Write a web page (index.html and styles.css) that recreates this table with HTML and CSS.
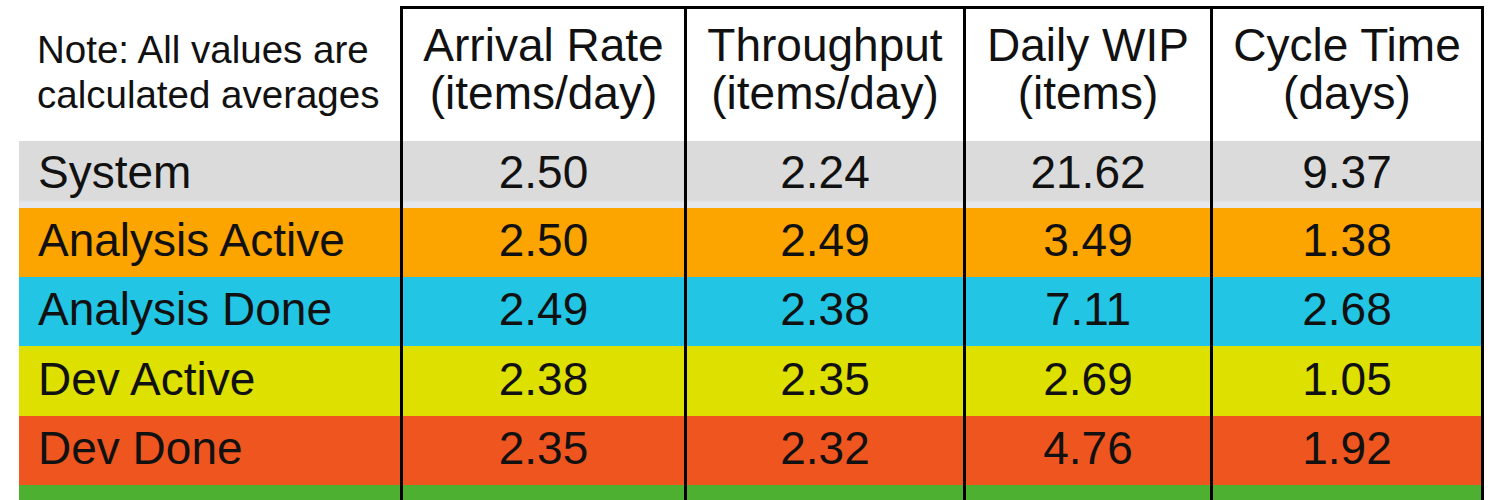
FILE: index.html
```html
<!DOCTYPE html>
<html lang="en">
<head>
<meta charset="utf-8">
<title>Flow metrics</title>
<link rel="stylesheet" href="styles.css">
</head>
<body>
<div class="metrics">
  <div class="cell note">Note: All values are<br>calculated averages</div>
  <div class="cell head">Arrival Rate<br>(items/day)</div>
  <div class="cell head">Throughput<br>(items/day)</div>
  <div class="cell head">Daily WIP<br>(items)</div>
  <div class="cell head last">Cycle Time<br>(days)</div>

  <div class="cell label system">System</div>
  <div class="cell val system">2.50</div>
  <div class="cell val system">2.24</div>
  <div class="cell val system">21.62</div>
  <div class="cell val last system">9.37</div>

  <div class="cell label aa">Analysis Active</div>
  <div class="cell val aa">2.50</div>
  <div class="cell val aa">2.49</div>
  <div class="cell val aa">3.49</div>
  <div class="cell val last aa">1.38</div>

  <div class="cell label ad">Analysis Done</div>
  <div class="cell val ad">2.49</div>
  <div class="cell val ad">2.38</div>
  <div class="cell val ad">7.11</div>
  <div class="cell val last ad">2.68</div>

  <div class="cell label da">Dev Active</div>
  <div class="cell val da">2.38</div>
  <div class="cell val da">2.35</div>
  <div class="cell val da">2.69</div>
  <div class="cell val last da">1.05</div>

  <div class="cell label dd">Dev Done</div>
  <div class="cell val dd">2.35</div>
  <div class="cell val dd">2.32</div>
  <div class="cell val dd">4.76</div>
  <div class="cell val last dd">1.92</div>

  <div class="cell label gr"></div>
  <div class="cell val gr"></div>
  <div class="cell val gr"></div>
  <div class="cell val gr"></div>
  <div class="cell val last gr"></div>
</div>
</body>
</html>
```
FILE: styles.css
```css
html, body {
  margin: 0;
  padding: 0;
  background: #ffffff;
  overflow: hidden;
}

body {
  font-family: "Liberation Sans", Arial, sans-serif;
  color: #111111;
}

.metrics {
  display: grid;
  grid-template-columns: 381px 284px 279px 247px 274px;
  grid-template-rows: 135px 67px 69px 69px 70px 69px 69px;
  margin: 6px 0 0 19px;
}

.cell {
  box-sizing: border-box;
  display: flex;
  align-items: center;
  justify-content: center;
  font-size: 46px;
  line-height: 48px;
  white-space: nowrap;
}

.note {
  display: block;
  font-size: 38.5px;
  line-height: 45px;
  padding: 21px 0 0 18px;
}

.head {
  display: block;
  text-align: center;
  border-top: 3px solid #000;
  border-left: 3px solid #000;
  padding-top: 12px;
}

.val {
  border-left: 3px solid #000;
  padding-bottom: 5px;
}

.last {
  border-right: 3px solid #000;
}

.label {
  justify-content: flex-start;
  padding: 0 0 5px 19px;
}

.system {
  background: linear-gradient(to bottom, #dbdbdb 0, #dbdbdb 88%, #e4e7eb 92%, #e4e7eb 100%);
}

.aa { background: #fca400; }
.ad { background: #22c5e4; }
.da { background: #dee000; }
.dd { background: #ef561f; }
.gr { background: #4db030; }
```
